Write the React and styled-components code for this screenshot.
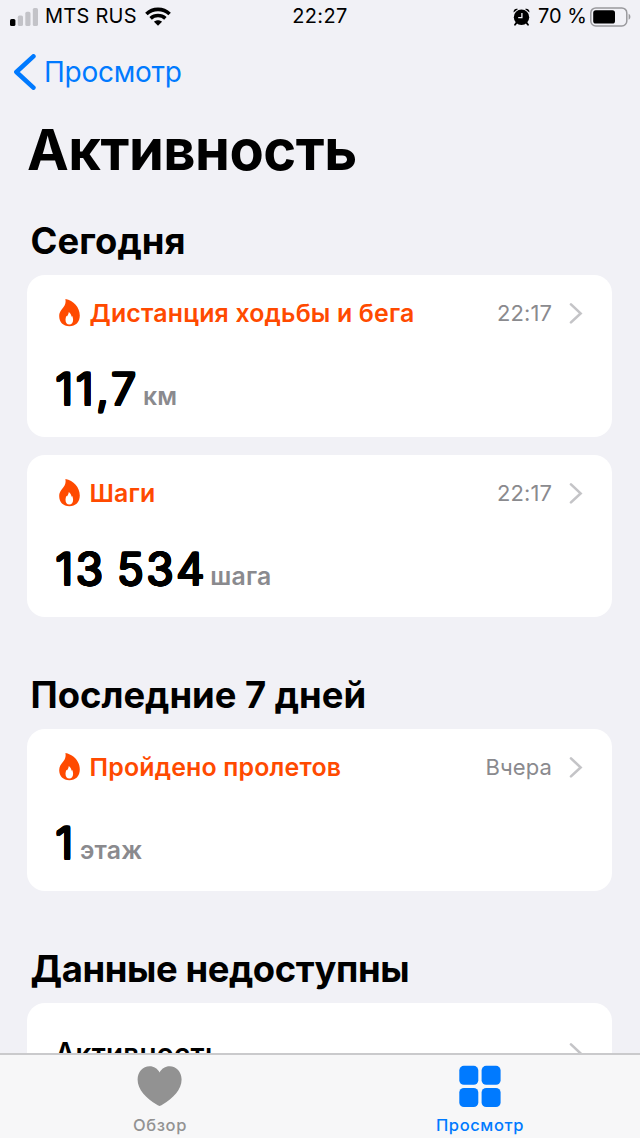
import React from 'react'
import styled, { createGlobalStyle } from 'styled-components'

const blocks = [
  {
    title: 'Сегодня',
    spacing: 0.1,
    cards: [
      { name: 'Дистанция ходьбы и бега', time: '22:17', value: '11,7', unit: 'км', gap: 4 },
      { name: 'Шаги', time: '22:17', value: '13 534', unit: 'шага', gap: 3 },
    ],
  },
  {
    title: 'Последние 7 дней',
    spacing: 0,
    cards: [
      { name: 'Пройдено пролетов', time: 'Вчера', value: '1', unit: 'этаж', gap: 4 },
    ],
  },
]

// thickens a light digit evenly on all sides, so its ends come out round
const roundOff = Array.from({ length: 16 }, (_, i) => {
  const a = (i * Math.PI) / 8
  return `${(Math.cos(a) * 1.4).toFixed(2)}px ${(Math.sin(a) * 1.4).toFixed(2)}px 0 #000`
}).join(', ')

function Chevron() {
  return (
    <svg width="14" height="22" viewBox="0 0 14 22" fill="none">
      <path d="M2 2.4 L11.6 11.4 L2 20.4" stroke="#c4c4c7" strokeWidth="2.6" strokeLinecap="round" strokeLinejoin="miter" />
    </svg>
  )
}

function Flame() {
  return (
    <svg width="21" height="28" viewBox="0 0 21 28">
      <path
        fill="#ff4a00"
        fillRule="evenodd"
        d="M6.4 0 C14.5 1.4 20.8 8.4 20.8 16.4 C20.8 23 16.6 27.2 10.4 27.2 C4.2 27.2 0.2 23 0.2 17.2 C0.2 13 2.6 10.6 4.6 8 C6.4 5.6 7 3 6.4 0 Z M9.8 13 C9.7 15 8.7 16.2 8.1 17.2 L7.4 16.9 C6.9 18 6.5 19.4 6.5 20.8 C6.5 23.6 7.9 25.6 10.3 25.6 C12.7 25.6 14.1 23.6 14.1 20.8 C14.1 19.6 13.8 18.4 13.3 17.1 L12.6 17.8 C12.3 15.8 11.3 14.1 9.8 13 Z"
      />
    </svg>
  )
}

function StatusBar() {
  return (
    <Status>
      <StatusSide>
        <svg width="29" height="18" viewBox="0 0 29 18">
          <rect x="0" y="11" width="5.4" height="7" rx="1.6" fill="#000" />
          <rect x="7.8" y="7.6" width="5.2" height="10.4" rx="1.6" fill="#c3c3c8" />
          <rect x="15.3" y="3.8" width="5.2" height="14.2" rx="1.6" fill="#c3c3c8" />
          <rect x="22.8" y="0" width="5.2" height="18" rx="1.6" fill="#c3c3c8" />
        </svg>
        <Carrier>MTS RUS</Carrier>
        <svg width="26" height="19" viewBox="0 0 26 19" fill="none" stroke="#000" strokeWidth="3.6">
          <path d="M1.4 7 C7.8 0.8 18.2 0.8 24.6 7" />
          <path d="M5.6 11.4 C9.8 7.6 16.2 7.6 20.4 11.4" />
          <path d="M13 18.8 L9 14.8 C11.2 12.8 14.8 12.8 17 14.8 Z" fill="#000" stroke="none" />
        </svg>
      </StatusSide>
      <Clock>22:27</Clock>
      <StatusSide $end>
        <svg width="17" height="18" viewBox="0 0 17 18">
          <path d="M0.6 4.4 C0.2 2 2.4 0 5 0.9 Z M16.4 4.4 C16.8 2 14.6 0 12 0.9 Z" fill="#000" />
          <path d="M3.6 14.6 L2 16.8 M13.4 14.6 L15 16.8" stroke="#000" strokeWidth="1.8" strokeLinecap="round" />
          <circle cx="8.5" cy="9.2" r="7.7" fill="#000" />
          <path d="M8.9 4.9 V9.6 H5.2" stroke="#f1f1f6" strokeWidth="1.3" fill="none" />
        </svg>
        <Percent>70 %</Percent>
        <svg width="41" height="20" viewBox="0 0 41 20">
          <rect x="0.8" y="0.9" width="36" height="18" rx="5" fill="none" stroke="#99999d" strokeWidth="1.5" />
          <rect x="3.2" y="3.3" width="21.8" height="13.2" rx="2.6" fill="#000" />
          <path d="M38.6 6.8 C41 7.6 41 12 38.6 12.8 Z" fill="#99999d" />
        </svg>
      </StatusSide>
    </Status>
  )
}

function MetricCard({ name, time, value, unit, gap }) {
  return (
    <Card>
      <CardHead>
        <Flame />
        <CardName>{name}</CardName>
        <Time>{time}</Time>
        <Chevron />
      </CardHead>
      <Reading>
        <Value>{value}</Value>
        <Unit $gap={gap}>{unit}</Unit>
      </Reading>
    </Card>
  )
}

function App() {
  return (
    <Screen>
      <GlobalStyle />
      <StatusBar />

      <Nav>
        <svg width="24" height="36" viewBox="0 0 24 36" fill="none">
          <path d="M20.4 2.4 L3.4 18 L20.4 33.6" stroke="#007aff" strokeWidth="4.6" strokeLinecap="round" strokeLinejoin="round" />
        </svg>
        <Back>Просмотр</Back>
      </Nav>

      <Content>
        <Title>Активность</Title>

        {blocks.map(block => (
          <Block key={block.title}>
            <Heading $spacing={block.spacing}>{block.title}</Heading>
            {block.cards.map(card => (
              <MetricCard key={card.name} {...card} />
            ))}
          </Block>
        ))}

        <Block>
          <Heading $spacing={-0.4}>Данные недоступны</Heading>
          <Card>
            <EmptyRow>
              <span>Активность</span>
              <Chevron />
            </EmptyRow>
          </Card>
        </Block>
      </Content>

      <TabBar>
        <Tab>
          <svg width="46" height="42" viewBox="0 0 46 42">
            <path fill="#929292" d="M22.6 41 C21.8 41 21 40.4 20 39.8 C9 33 0.6 24.4 0.6 14.4 C0.6 6.8 5.8 1.2 12.6 1.2 C17 1.2 20.6 3.6 22.6 7.4 C24.6 3.6 28.2 1.2 32.6 1.2 C39.4 1.2 44.6 6.8 44.6 14.4 C44.6 24.4 36.2 33 25.2 39.8 C24.2 40.4 23.4 41 22.6 41 Z" />
          </svg>
          <TabLabel>Обзор</TabLabel>
        </Tab>
        <Tab $active>
          <svg width="42" height="42" viewBox="0 0 42 42" fill="#007aff">
            <rect x="0.3" y="0.8" width="19" height="19" rx="4.6" />
            <rect x="22.6" y="0.8" width="19" height="19" rx="4.6" />
            <rect x="0.3" y="23" width="19" height="19" rx="4.6" />
            <rect x="22.6" y="23" width="19" height="19" rx="4.6" />
          </svg>
          <TabLabel>Просмотр</TabLabel>
        </Tab>
      </TabBar>
    </Screen>
  )
}

export default App

const GlobalStyle = createGlobalStyle`
  * {
    box-sizing: border-box;
  }

  body {
    margin: 0;
    background: #f1f1f6;
  }

  svg {
    display: block;
    flex-shrink: 0;
  }
`

const Screen = styled.div`
  display: flex;
  flex-direction: column;
  width: 640px;
  height: 1138px;
  overflow: hidden;
  background: #f1f1f6;
  color: #000;
  font-family: Inter, "Liberation Sans", sans-serif;
  white-space: nowrap;
`

const Status = styled.div`
  display: grid;
  grid-template-columns: 1fr auto 1fr;
  align-items: center;
  height: 32px;
  padding: 1px 9px 0 10px;
  font-size: 20px;
  line-height: 31px;
`
const StatusSide = styled.div`
  display: flex;
  align-items: center;
  justify-content: ${p => (p.$end ? 'flex-end' : 'flex-start')};
`
const Carrier = styled.span`
  margin: 0 8px 0 6px;
  letter-spacing: 0.25px;
`
const Clock = styled.span`
  margin-right: 1px;
  letter-spacing: 0.4px;
`
const Percent = styled.span`
  margin: 0 3px 0 8px;
`

const Nav = styled.div`
  display: flex;
  align-items: center;
  flex-shrink: 0;
  height: 79px;
  padding-left: 13px;
  color: #007aff;
`
const Back = styled.span`
  margin-left: 7px;
  font-size: 28px;
  letter-spacing: -0.25px;
`

const Content = styled.main`
  flex: 1;
  min-height: 0;
  overflow: hidden;
  padding: 5px 28px 0 27px;
`

const Title = styled.h1`
  margin: 0;
  font-size: 56px;
  font-weight: 700;
  letter-spacing: -0.5px;
  line-height: 68px;
`

const Block = styled.section`
  margin-top: 56px;

  h1 + & {
    margin-top: 35px;
  }
`

const Heading = styled.h2`
  margin: 0 0 12px 3.5px;
  font-size: 36.4px;
  font-weight: 700;
  letter-spacing: ${p => p.$spacing}px;
  line-height: 44px;
`

const Card = styled.div`
  height: 162px;
  padding: 20px 29px 0 28px;
  border-radius: 18px;
  background: #fff;

  & + & {
    margin-top: 18px;
  }
`

const CardHead = styled.div`
  display: flex;
  align-items: center;
  height: 35px;
  padding-left: 4px;
`
const CardName = styled.span`
  flex: 1;
  margin-left: 9.5px;
  color: #ff4a00;
  font-size: 24.9px;
  font-weight: 600;
  letter-spacing: 0.18px;
`
const Time = styled.span`
  margin-right: 17px;
  color: #8a8a8e;
  font-size: 22px;
  letter-spacing: 0.1px;
`

const Reading = styled.div`
  display: flex;
  align-items: baseline;
  margin-top: 31px;
  line-height: 56px;
`
const Value = styled.span`
  margin-left: 0.5px;
  font-size: 44.5px;
  font-weight: 300;
  letter-spacing: 2.9px;
  word-spacing: -4px;
  text-rendering: geometricPrecision;
  text-shadow: ${roundOff};
`
const Unit = styled.span`
  margin-left: ${p => p.$gap}px;
  color: #8a8a8e;
  font-size: 24.8px;
  font-weight: 600;
  letter-spacing: 0.2px;
  line-height: 30px;
`

const EmptyRow = styled.div`
  display: flex;
  align-items: center;
  justify-content: space-between;
  height: 60px;
  font-size: 27.8px;
  font-weight: 600;
  letter-spacing: 0.3px;
`

const TabBar = styled.nav`
  display: flex;
  flex-shrink: 0;
  height: 85px;
  border-top: 2px solid #cacacc;
  background: #f7f7f8;
`
const Tab = styled.div`
  display: flex;
  flex: 1;
  flex-direction: column;
  align-items: center;
  padding-top: 10px;
  color: ${p => (p.$active ? '#007aff' : '#929292')};
`
const TabLabel = styled.span`
  margin-top: 8px;
  font-size: 16.5px;
  font-weight: 500;
  letter-spacing: 0.6px;
  line-height: 20px;
`
